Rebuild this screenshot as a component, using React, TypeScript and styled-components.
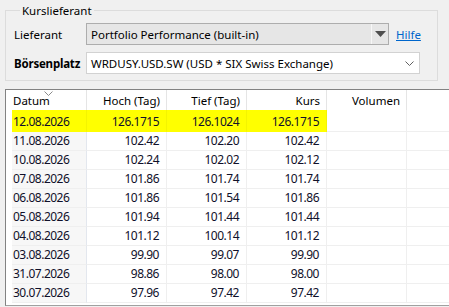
import React from "react";
import styled, { createGlobalStyle } from "styled-components";

const GlobalStyle = createGlobalStyle`
  html, body {
    margin: 0;
    padding: 0;
    background: #f0f0f0;
  }
  body {
    font-family: "Noto Sans", "Open Sans", sans-serif;
    font-size: 11.5px;
    color: #000;
  }
  * { box-sizing: border-box; }
`;

const Page = styled.div`
  width: 449px;
  height: 307px;
  overflow: hidden;
  padding: 3px 0 0 5px;
  display: flex;
  flex-direction: column;
`;

const Group = styled.fieldset`
  margin: 0 11px 0 0;
  padding: 5px 0 6px 8px;
  border: 1px solid #dcdcdc;
  min-width: 0;
`;

const Legend = styled.legend`
  margin-left: 6px;
  padding: 0 2px;
  font-size: 11.5px;
  line-height: 15px;
`;

const Form = styled.div`
  display: grid;
  grid-template-columns: 72px auto;
  row-gap: 7px;
  align-items: center;
`;

const Label = styled.span<{ $bold?: boolean }>`
  font-weight: ${(p) => (p.$bold ? 700 : 400)};
  letter-spacing: ${(p) => (p.$bold ? "-0.2px" : "0")};
  white-space: nowrap;
`;

const ControlRow = styled.div`
  display: flex;
  align-items: center;
  gap: 7px;
`;

const ReadOnlyCombo = styled.div`
  width: 303px;
  height: 22px;
  background: #e6e6e6;
  border: 1px solid #adadad;
  display: flex;
  align-items: center;
`;

const ComboText = styled.span`
  flex: 1;
  padding-left: 4px;
  white-space: nowrap;
  overflow: hidden;
`;

const ComboButton = styled.span`
  width: 17px;
  align-self: stretch;
  border-left: 1px solid #f7f7f7;
  display: flex;
  align-items: center;
  justify-content: center;
`;

const EditCombo = styled.div`
  width: 334px;
  height: 22px;
  background: #fff;
  border: 1px solid #d2d2d2;
  display: flex;
  align-items: center;
`;

const ChevronBox = styled.span`
  width: 20px;
  display: flex;
  align-items: center;
  justify-content: center;
`;

const HelpLink = styled.a`
  color: #0066cc;
  text-decoration: underline;
  cursor: pointer;
`;

const Table = styled.div`
  margin-top: 8px;
  margin-right: -4px;
  height: 217px;
  border-top: 1px solid #828282;
  border-left: 1px solid #828282;
  border-bottom: 1px solid #a0a0a0;
  background: #fff;
  overflow: hidden;
`;

const COLS = "81px 80px 80px 80px 80px 1fr";

const HeaderRow = styled.div`
  display: grid;
  grid-template-columns: ${COLS};
  height: 20px;
`;

const HeaderCell = styled.div<{ $left?: boolean }>`
  position: relative;
  border-right: 1px solid #e5e5e5;
  padding: 2px ${(p) => (p.$left ? "0" : "6px")} 0 ${(p) => (p.$left ? "7px" : "0")};
  text-align: ${(p) => (p.$left ? "left" : "right")};
  line-height: 18px;
  white-space: nowrap;
`;

const FillerCell = styled.div``;

const SortMark = styled.svg`
  position: absolute;
  left: 38px;
  top: 1px;
`;

const Row = styled.div<{ $first?: boolean }>`
  display: grid;
  grid-template-columns: ${COLS};
  height: ${(p) => (p.$first ? "22px" : "19px")};
`;

const Cell = styled.div<{ $date?: boolean; $hl?: boolean; $first?: boolean }>`
  margin-left: ${(p) => (p.$date ? "6px" : "0")};
  padding: ${(p) => (p.$first ? "4px" : "1px")} ${(p) => (p.$date ? "0" : "7px")} 0
    ${(p) => (p.$date ? "1px" : "0")};
  text-align: ${(p) => (p.$date ? "left" : "right")};
  background: ${(p) => (p.$hl ? "#ffff00" : p.$date ? "#f7f7f7" : "#fff")};
  border-bottom: 1px solid ${(p) => (p.$hl ? "#ffff00" : "#efefef")};
  border-right: 1px solid
    ${(p) => (p.$hl ? "#f4f400" : p.$date ? "#e3e7ee" : "#efefef")};
  color: #10102a;
  font-size: 12px;
  letter-spacing: -0.5px;
  line-height: 16px;
  white-space: nowrap;
`;

const EmptyCell = styled.div`
  border-bottom: 1px solid #efefef;
`;

type Quote = { date: string; high: string; low: string; close: string };

const rows: Quote[] = [
  { date: "12.08.2026", high: "126.1715", low: "126.1024", close: "126.1715" },
  { date: "11.08.2026", high: "102.42", low: "102.20", close: "102.42" },
  { date: "10.08.2026", high: "102.24", low: "102.02", close: "102.12" },
  { date: "07.08.2026", high: "101.86", low: "101.74", close: "101.74" },
  { date: "06.08.2026", high: "101.86", low: "101.54", close: "101.86" },
  { date: "05.08.2026", high: "101.94", low: "101.44", close: "101.44" },
  { date: "04.08.2026", high: "101.12", low: "100.14", close: "101.12" },
  { date: "03.08.2026", high: "99.90", low: "99.07", close: "99.90" },
  { date: "31.07.2026", high: "98.86", low: "98.00", close: "98.00" },
  { date: "30.07.2026", high: "97.96", low: "97.42", close: "97.42" },
];

export default function App() {
  return (
    <>
      <GlobalStyle />
      <Page>
        <Group>
          <Legend>Kurslieferant</Legend>
          <Form>
            <Label>Lieferant</Label>
            <ControlRow>
              <ReadOnlyCombo>
                <ComboText>Portfolio Performance (built-in)</ComboText>
                <ComboButton>
                  <svg width="11" height="6" viewBox="0 0 11 6">
                    <polygon points="0,0 11,0 5.5,6" fill="#4f4f4f" />
                  </svg>
                </ComboButton>
              </ReadOnlyCombo>
              <HelpLink>Hilfe</HelpLink>
            </ControlRow>
            <Label $bold>Börsenplatz</Label>
            <ControlRow>
              <EditCombo>
                <ComboText>WRDUSY.USD.SW (USD * SIX Swiss Exchange)</ComboText>
                <ChevronBox>
                  <svg width="9" height="5" viewBox="0 0 9 5">
                    <polyline
                      points="0.5,0.5 4.5,4.5 8.5,0.5"
                      fill="none"
                      stroke="#606060"
                      strokeWidth="1"
                    />
                  </svg>
                </ChevronBox>
              </EditCombo>
            </ControlRow>
          </Form>
        </Group>
        <Table>
          <HeaderRow>
            <HeaderCell $left>
              <SortMark width="9" height="5" viewBox="0 0 9 5">
                <polyline
                  points="0.5,0.5 4.5,4.5 8.5,0.5"
                  fill="none"
                  stroke="#8a8a8a"
                  strokeWidth="1"
                />
              </SortMark>
              Datum
            </HeaderCell>
            <HeaderCell>Hoch (Tag)</HeaderCell>
            <HeaderCell>Tief (Tag)</HeaderCell>
            <HeaderCell>Kurs</HeaderCell>
            <HeaderCell>Volumen</HeaderCell>
            <FillerCell />
          </HeaderRow>
          {rows.map((r, i) => {
            const hl = i === 0;
            return (
              <Row key={r.date} $first={hl}>
                <Cell $date $hl={hl} $first={hl}>
                  {r.date}
                </Cell>
                <Cell $hl={hl} $first={hl}>
                  {r.high}
                </Cell>
                <Cell $hl={hl} $first={hl}>
                  {r.low}
                </Cell>
                <Cell $hl={hl} $first={hl}>
                  {r.close}
                </Cell>
                <Cell $first={hl} />
                <EmptyCell />
              </Row>
            );
          })}
        </Table>
      </Page>
    </>
  );
}
